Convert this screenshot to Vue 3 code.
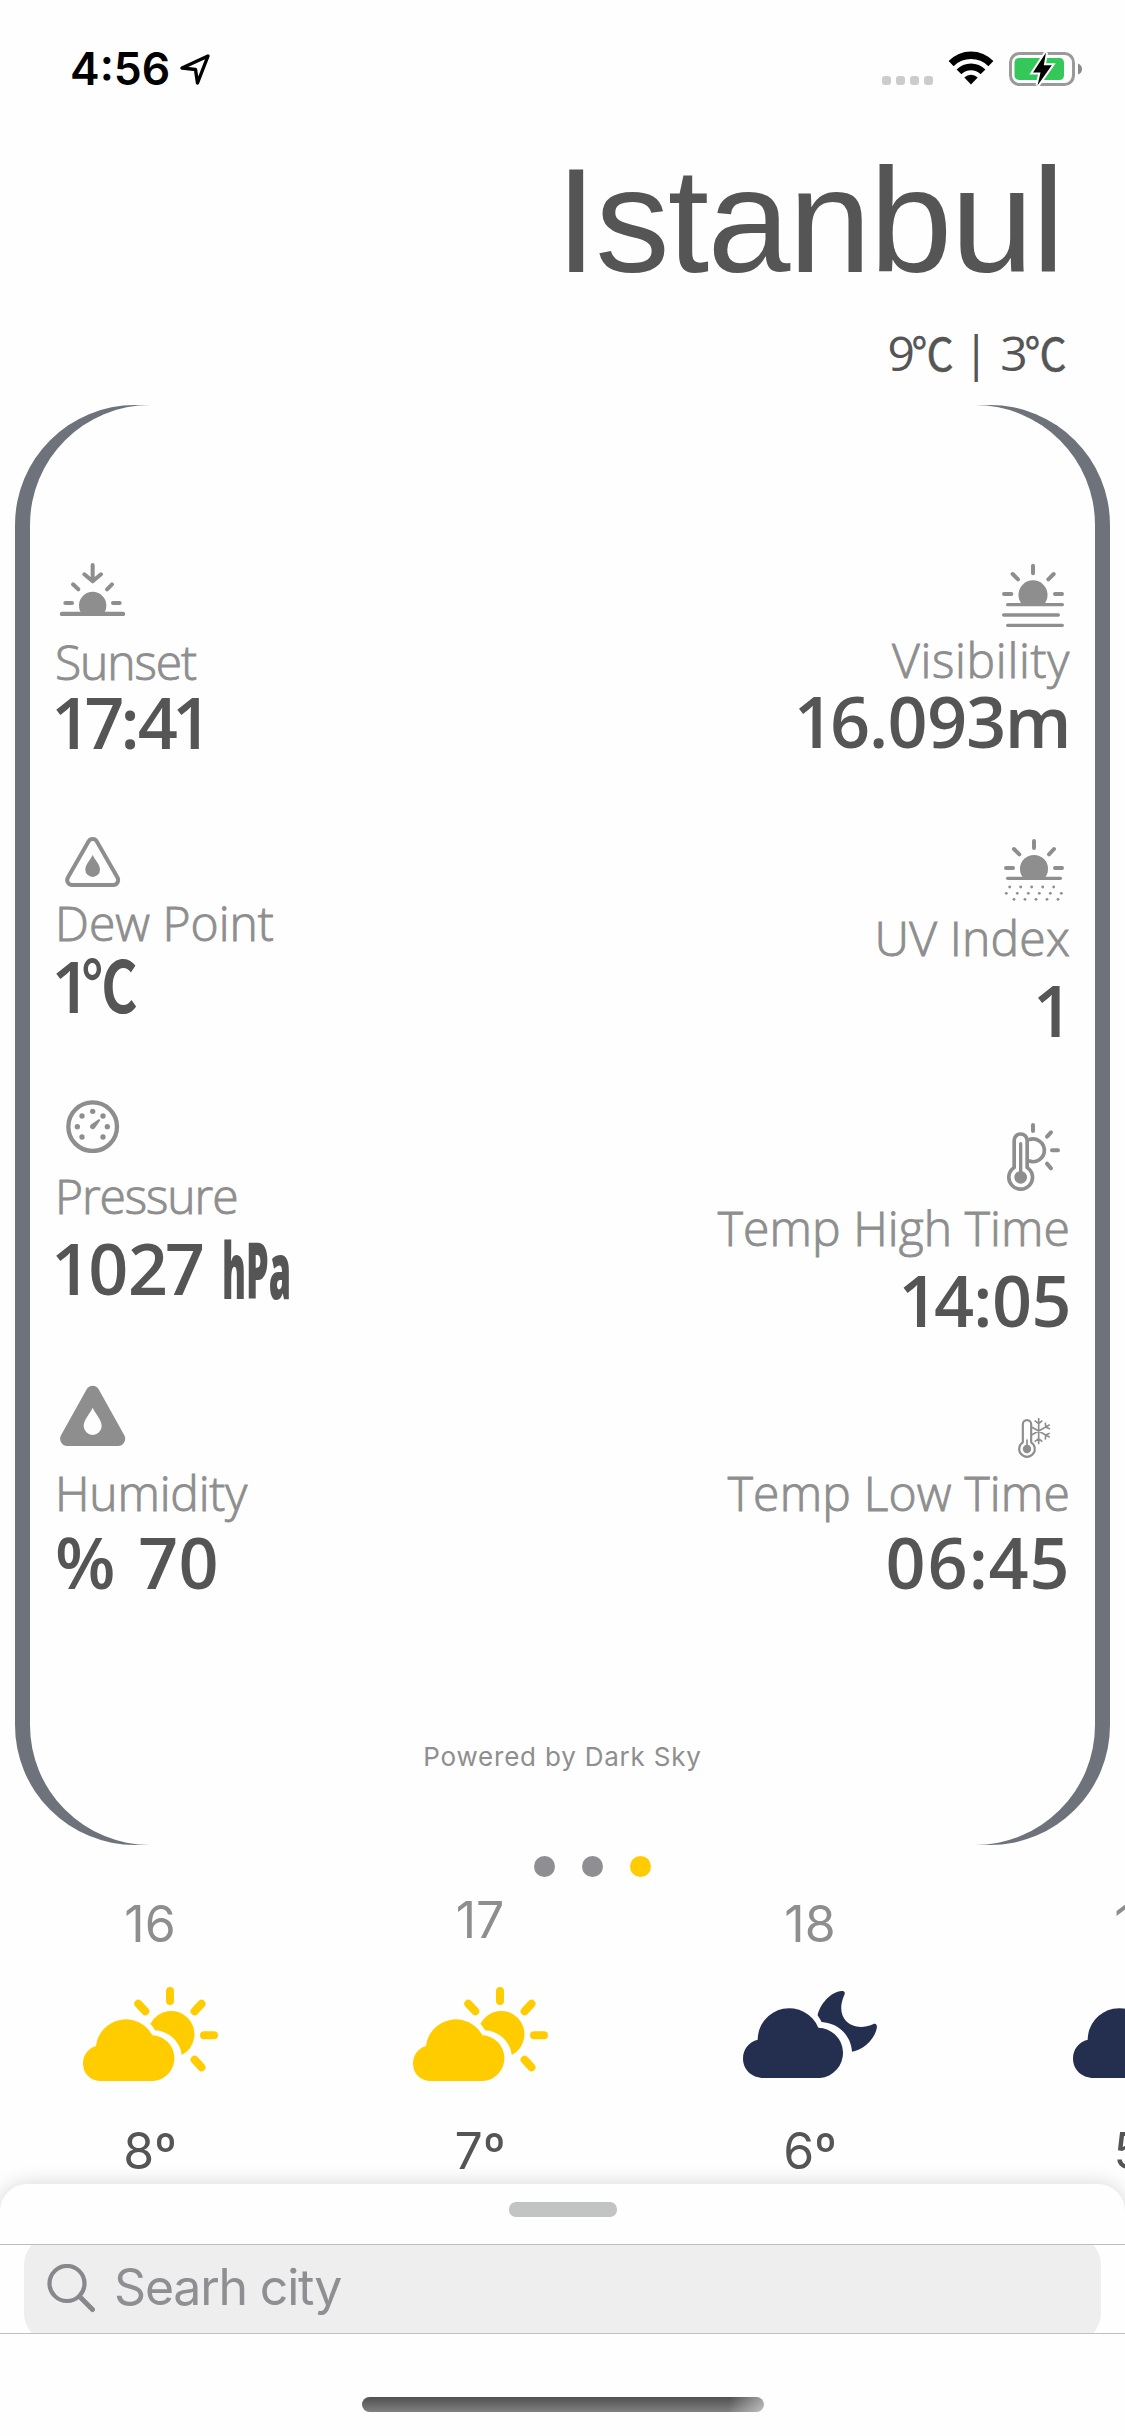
<script setup>
const left = [
  { id: 'sunset', label: 'Sunset', value: '17:41', h: 54 },
  { id: 'dew', label: 'Dew Point', value: '1', degree: '℃', h: 51 },
  { id: 'pressure', label: 'Pressure', value: '1027', unit: 'hPa', h: 53 },
  { id: 'humidity', label: 'Humidity', value: '% 70', h: 61 },
]
const right = [
  { id: 'visibility', label: 'Visibility', value: '16.093m', h: 65 },
  { id: 'uv', label: 'UV Index', value: '1', h: 64 },
  { id: 'high', label: 'Temp High Time', value: '14:05', h: 70 },
  { id: 'low', label: 'Temp Low Time', value: '06:45', h: 42 },
]
const columns = [
  { side: 'start', items: left },
  { side: 'end', items: right },
]
const gaugeDots = [[81, 48], [113, 34], [144, 48], [67, 80], [157, 80], [81, 111], [144, 111]]
const uvDots = [
  ...[41, 74, 107, 140, 173].map((x) => [x, 147]),
  ...[31, 64, 97, 130, 163, 196].map((x) => [x, 166]),
  ...[54, 87, 120, 153, 186].map((x) => [x, 184]),
]
const hours = [
  { hour: '16', icon: 'sun', temp: '8º' },
  { hour: '17', icon: 'sun', temp: '7º', raised: true },
  { hour: '18', icon: 'moon', temp: '6º' },
  { hour: '19', icon: 'moon', temp: '5º' },
]
</script>

<template>
  <main class="screen">
    <header class="status">
      <span class="clock">4:56</span>
      <svg class="arrow" width="34" height="34" viewBox="0 0 34 34">
        <path d="M30 4 L4 16 L17.5 17.5 L19.5 31 Z" fill="none" stroke="#000" stroke-width="3.4" stroke-linejoin="round" />
      </svg>
      <span class="signal"><i /><i /><i /><i /></span>
      <svg class="wifi" width="46" height="34" viewBox="0 0 46 34">
        <path d="M.6 10 A31 31 0 0 1 45.4 10 L40.4 15.2 A24.5 24.5 0 0 0 5.6 15.2 Z" />
        <path d="M8.6 18.4 A20.3 20.3 0 0 1 37.4 18.4 L32.6 23.3 A13.6 13.6 0 0 0 13.4 23.3 Z" />
        <path d="M16.3 26.4 A9.5 9.5 0 0 1 29.7 26.4 L23 33.4 Z" />
      </svg>
      <svg class="battery" width="74" height="36" viewBox="0 0 74 36">
        <rect x="2.5" y="2.5" width="63" height="31" rx="9" fill="none" stroke="#9a9a9a" stroke-width="3" />
        <path d="M70 12.5 Q74 14 74 18 Q74 22 70 23.5 Z" fill="#8a8a8a" />
        <rect x="6.5" y="7" width="49.5" height="22" rx="4.5" fill="#34c759" />
        <path d="M38 1.5 L25 21.5 H32.5 L29.5 34.5 L43.8 14.3 H35.8 Z" fill="#000" stroke="#fff" stroke-width="4" paint-order="stroke" />
      </svg>
    </header>

    <h1 class="city">Istanbul</h1>
    <p class="range">9<span class="deg">℃</span> | 3<span class="deg">℃</span></p>

    <section class="card">
      <div class="face">
        <div class="columns">
          <div v-for="c in columns" :key="c.side" class="column" :class="c.side">
            <article v-for="m in c.items" :key="m.id" class="metric" :class="m.id">
              <svg class="glyph" width="75" :height="m.h" :viewBox="`0 0 225 ${m.h * 3}`">
                <g v-if="m.id === 'sunset'">
                  <path class="solid" d="M81 156 A41 41 0 1 1 145 156 Z" />
                  <path class="line w13" d="M21 156H204" />
                  <path class="line w12" d="M31 123H51M174 123H194M54 67L70 82M171 67L156 82M113 9V58M88 37L113 58L138 37" />
                </g>
                <g v-else-if="m.id === 'dew'">
                  <path class="line w12" d="M100.5 16.5a14.5 14.5 0 0 1 25 0L187 124a15 15 0 0 1-13 23H52a15 15 0 0 1-13-23Z" />
                  <path class="solid" d="M113 57C120 72 135 85 135 101a22 22 0 0 1-44 0C91 85 106 72 113 57Z" />
                </g>
                <g v-else-if="m.id === 'pressure'">
                  <circle class="line w13" cx="113" cy="80" r="73" />
                  <circle v-for="(d, i) in gaugeDots" :key="i" class="solid" :cx="d[0]" :cy="d[1]" r="8" />
                  <path class="solid" d="M132 57L136 61L120 84A8 8 0 1 1 109 73Z" />
                </g>
                <path
                  v-else-if="m.id === 'humidity'" class="solid" fill-rule="evenodd"
                  d="M95 13a20.5 20.5 0 0 1 36 0L207.5 150a22 22 0 0 1-19.5 33H38a22 22 0 0 1-19.5-33ZM113 68C122 88 140 104 140 123a27 27 0 0 1-54 0C86 104 104 88 113 68Z"
                />
                <g v-else-if="m.id === 'visibility'">
                  <path class="solid" d="M79 125A43.5 43.5 0 1 1 143 125Z" />
                  <path class="line w12" d="M111 8V31M50 33L66 49M173 33L157 49M24 93H46M177 93H198" />
                  <path class="line w10" d="M35 125H199M23 156H187M35 187H199" />
                </g>
                <g v-else-if="m.id === 'uv'">
                  <path class="solid" d="M83 121A42 42 0 1 1 145 121Z" />
                  <path class="line w12" d="M114 9V30M54 33L70 49M174 33L159 49M30 90H51M177 90H198" />
                  <path class="line w10" d="M35 121H193" />
                  <circle v-for="(d, i) in uvDots" :key="i" class="solid" :cx="d[0]" :cy="d[1]" r="4.2" />
                </g>
                <g v-else-if="m.id === 'high'">
                  <path class="line w11" d="M54.5 136.3V55.5a19.5 19.5 0 0 1 39 0V136.3A35.5 35.5 0 1 1 54.5 136.3Z" />
                  <path class="line w10" d="M74 65V150" />
                  <circle class="solid" cx="74" cy="166" r="19" />
                  <path class="line w11 butt" d="M98 53.6A34 34 0 1 1 98 116.4" />
                  <path class="line w12" d="M111 9V27M165 31L153 44M168 85H186M153 125L165 139" />
                </g>
                <g v-else>
                  <path class="line w6" d="M80.5 76V22a12.5 12.5 0 0 1 25 0V76A23.5 23.5 0 1 1 80.5 76Z" />
                  <path class="line w5" d="M93 69V90" />
                  <circle class="solid" cx="93" cy="96" r="12.5" />
                  <path class="line w5 butt" d="M128 3V82M108 31L161 61M108 53L161 23M116 11L128 20L139 11M116 74L128 65L139 74M148 17L149 30L162 36M161 49L149 54L148 68" />
                </g>
              </svg>
              <div class="label">{{ m.label }}</div>
              <div class="value">{{ m.value }}<span v-if="m.degree" class="degree">{{ m.degree }}</span><span v-if="m.unit" class="unit">{{ m.unit }}</span></div>
            </article>
          </div>
        </div>
        <footer class="credit">Powered by Dark Sky</footer>
      </div>
    </section>

    <nav class="pager"><i /><i /><i class="active" /></nav>

    <section class="hours">
      <article v-for="h in hours" :key="h.hour" class="hour">
        <div class="time" :class="{ raised: h.raised }">{{ h.hour }}</div>
        <div class="sky">
          <svg v-if="h.icon === 'sun'" class="sun" width="135" height="94" viewBox="0 0 135 94">
            <path d="M18 94C8 94 0 87 0 76.5C0 68 5 61.5 13 59A30 30 0 0 1 69.3 48.3A22.9 22.9 0 0 1 70.5 94Z" />
            <path d="M67.4 36.7A23.3 23.3 0 1 1 98.8 68A28 28 0 0 0 72 43.3Q70 39.5 67.4 36.7Z" />
            <path class="rays" d="M87 4V14M55.3 16.7L62.3 24.3M118.5 16.7L111.6 24.3M121 48.3H131M111.6 72.7L118.5 80.3" />
          </svg>
          <svg v-else class="moon" width="134" height="87" viewBox="0 0 134 87">
            <path d="M21 87C8 87 0 78 0 67.5C0 58 6 51 14.7 48.7A31.5 31.5 0 0 1 75.3 36.7A25.2 25.2 0 0 1 77 87Z" />
            <path d="M74.6 24.3C77 13 88 .5 98.7 0C101 0 102.5 1 101.5 3.5C96 16 98 24 103 30C109 36 119 38 130 33.2C133 32 134 33.5 133.9 36.5C132 48 121 58.5 109 60.7C108 44 95 32 78.6 31C77.5 28.5 76 26.5 74.6 24.3Z" />
          </svg>
        </div>
        <div class="temp">{{ h.temp }}</div>
      </article>
    </section>

    <section class="sheet">
      <div class="handle" />
      <div class="search">
        <div class="field">
          <svg width="48" height="50" viewBox="0 0 48 50" fill="none" stroke="#88888c" stroke-linecap="round">
            <circle cx="20" cy="19.5" r="17.5" stroke-width="4.2" />
            <path d="M32.5 32.5L45.5 45.5" stroke-width="5" />
          </svg>
          <span>Searh city</span>
        </div>
      </div>
      <div class="home" />
    </section>
  </main>
</template>

<style>
body { margin: 0; background: #fefefe; }
</style>

<style scoped>
.screen {
  width: 1125px;
  height: 2436px;
  overflow: hidden;
  display: flex;
  flex-direction: column;
  background: #fefefe;
  font-family: Inter, "Liberation Sans", sans-serif;
  color: #555;
}
.status { height: 132px; flex: none; display: flex; align-items: flex-start; box-sizing: border-box; padding: 51px 43px 0 70px; color: #000; }
.clock { width: 100px; font-size: 44.5px; line-height: 36px; font-weight: 600; white-space: nowrap; }
.arrow { margin: 1px 0 0 8px; }
.signal { display: flex; gap: 5px; margin: 25px 15px 0 auto; }
.signal i { width: 9px; height: 9px; border-radius: 3px; background: #ccc; }
.wifi { margin-right: 14px; }
.city { margin: 2px 62px 0 0; height: 173px; font: 400 149px/174px "Liberation Sans", sans-serif; text-align: right; letter-spacing: -1.8px; }
.range { margin: 14px 61px 0 0; height: 64px; font: 400 48px/64px "Open Sans", "Noto Sans CJK SC", sans-serif; text-align: right; white-space: pre; letter-spacing: -.8px; }
.deg { display: inline-block; font-family: "Noto Sans CJK SC", sans-serif; font-size: 46px; line-height: 1; font-weight: 400; transform: scaleX(.92); transform-origin: right; margin-left: -6px; margin-right: -2px; -webkit-text-stroke: .5px #555; }
.card {
  flex: none;
  height: 1440px;
  margin: 20px 15px 0;
  box-sizing: border-box;
  padding: 0 15px;
  border-radius: 120px;
  background: #6e727a;
}
.face { height: 1440px; border-radius: 120px; background: #fefefe; display: flex; flex-direction: column; }
.columns { flex: none; height: 1322px; display: flex; justify-content: space-between; padding: 0 25px; }
.column { display: flex; flex-direction: column; }
.metric { display: flex; flex-direction: column; height: var(--h); }
.end .metric { align-items: flex-end; text-align: right; }
.glyph { display: block; flex: none; margin-top: var(--top); }
.end .glyph { margin-right: -1px; }
.solid { fill: #8e8e8e; }
.line { fill: none; stroke: #8e8e8e; stroke-linecap: round; stroke-linejoin: round; }
.butt { stroke-linecap: butt; }
.w13 { stroke-width: 13; }
.w12 { stroke-width: 12; }
.w11 { stroke-width: 11; }
.w10 { stroke-width: 10; }
.w6 { stroke-width: 6.5; }
.w5 { stroke-width: 5; }
.label {
  flex: none;
  height: 60px;
  margin-top: calc(var(--label) + 1px);
  font: 300 48px/60px "Open Sans", "Noto Sans", sans-serif;
  letter-spacing: var(--label-track);
  -webkit-text-stroke: .9px #8e8e8e;
  color: #8e8e8e;
  white-space: pre;
}
.value {
  flex: none;
  height: 70px;
  margin-top: calc(var(--value) + 1px);
  font: 600 70px/70px "Open Sans", "Noto Sans CJK SC", sans-serif;
  font-variant-numeric: proportional-nums;
  letter-spacing: var(--track);
  white-space: pre;
}
.degree { display: inline-block; font-family: "Noto Sans CJK SC", sans-serif; font-weight: 600; line-height: 20px; transform: scaleX(.79); transform-origin: left; margin-left: -6px; }
.unit { display: inline-block; margin-left: 20px; font-size: 78px; font-weight: 800; letter-spacing: 0; line-height: 20px; transform: translateY(4px) scaleX(.46); transform-origin: left; }
/* heights run from one metric's origin to the next; gaps set the label and value baselines */
.sunset { --top: 157px; --label: 15px; --value: -6px; --h: 431px; --label-track: -1.1px; --track: -2.1px; }
.dew { --top: 0px; --label: 5px; --value: -3px; --h: 264px; --label-track: 0px; --track: 0px; }
.pressure { --top: 0px; --label: 12px; --value: 6px; --h: 285px; --label-track: -1.1px; --track: -.7px; }
.humidity { --top: 0px; --label: 16px; --value: 3px; --h: 260px; --label-track: -.2px; --track: 1.2px; }
.humidity .value { word-spacing: 4px; }
.visibility { --top: 158px; --label: 1px; --value: -5px; --h: 433px; --label-track: .7px; --track: -1.5px; }
.uv { --top: 0px; --label: 5px; --value: 6px; --h: 284px; --label-track: .2px; --track: 0px; }
.high { --top: 0px; --label: 5px; --value: 6px; --h: 295px; --label-track: .1px; --track: -1.3px; }
.low { --top: 0px; --label: 3px; --value: 3px; --h: 260px; --label-track: .2px; --track: .6px; }
.credit { text-align: center; font-size: 26px; line-height: 60px; letter-spacing: .8px; color: #8e8e8e; }
.pager { flex: none; height: 21px; margin-top: 11px; display: flex; justify-content: center; gap: 27px; padding-left: 60px; }
.pager i { width: 21px; height: 21px; border-radius: 50%; background: #8e8e93; }
.pager .active { background: #fc0; }
.hours { flex: none; height: 307px; display: flex; width: 1320px; margin-left: -15px; }
.hour { width: 330px; flex: none; display: flex; flex-direction: column; align-items: center; }
.time, .temp { font-size: 50px; line-height: 60px; height: 60px; }
.time { margin-top: 17px; color: #8e8e8e; }
.time.raised { margin: 13px 0 4px; }
.sky { height: 100px; margin-top: 30px; display: flex; align-items: center; }
.temp { margin-top: 37px; }
.sun { fill: #fc0; }
.rays { fill: none; stroke: #fc0; stroke-width: 8; stroke-linecap: round; }
.moon { fill: #242e4f; }
.sheet {
  flex: none;
  height: 252px;
  position: relative;
  background: #fefefe;
  border-radius: 27px 27px 0 0;
  box-shadow: 0 0 20px rgba(0, 0, 0, .16);
  display: flex;
  flex-direction: column;
  align-items: center;
}
.handle { flex: none; width: 108px; height: 15px; margin-top: 18px; border-radius: 7px; background: #c2c4c3; }
.search {
  flex: none;
  width: 100%;
  height: 90px;
  margin-top: 27px;
  box-sizing: border-box;
  border: solid #bfbfc1;
  border-width: 1px 0;
  overflow: hidden;
  display: flex;
  align-items: center;
  justify-content: center;
}
.field { flex: none; width: 1077px; height: 108px; box-sizing: border-box; padding-left: 23px; border-radius: 30px; background: #eee; display: flex; align-items: center; gap: 19px; font-size: 50px; color: #8e8e93; }
.field span { letter-spacing: -1.2px; padding-bottom: 4px; }
.home {
  flex: none;
  width: 402px;
  height: 15px;
  margin-top: 63px;
  border-radius: 8px;
  background: linear-gradient(100deg, transparent 91%, rgba(255, 255, 255, .5) 100%), linear-gradient(#505050, #808080);
}
</style>
